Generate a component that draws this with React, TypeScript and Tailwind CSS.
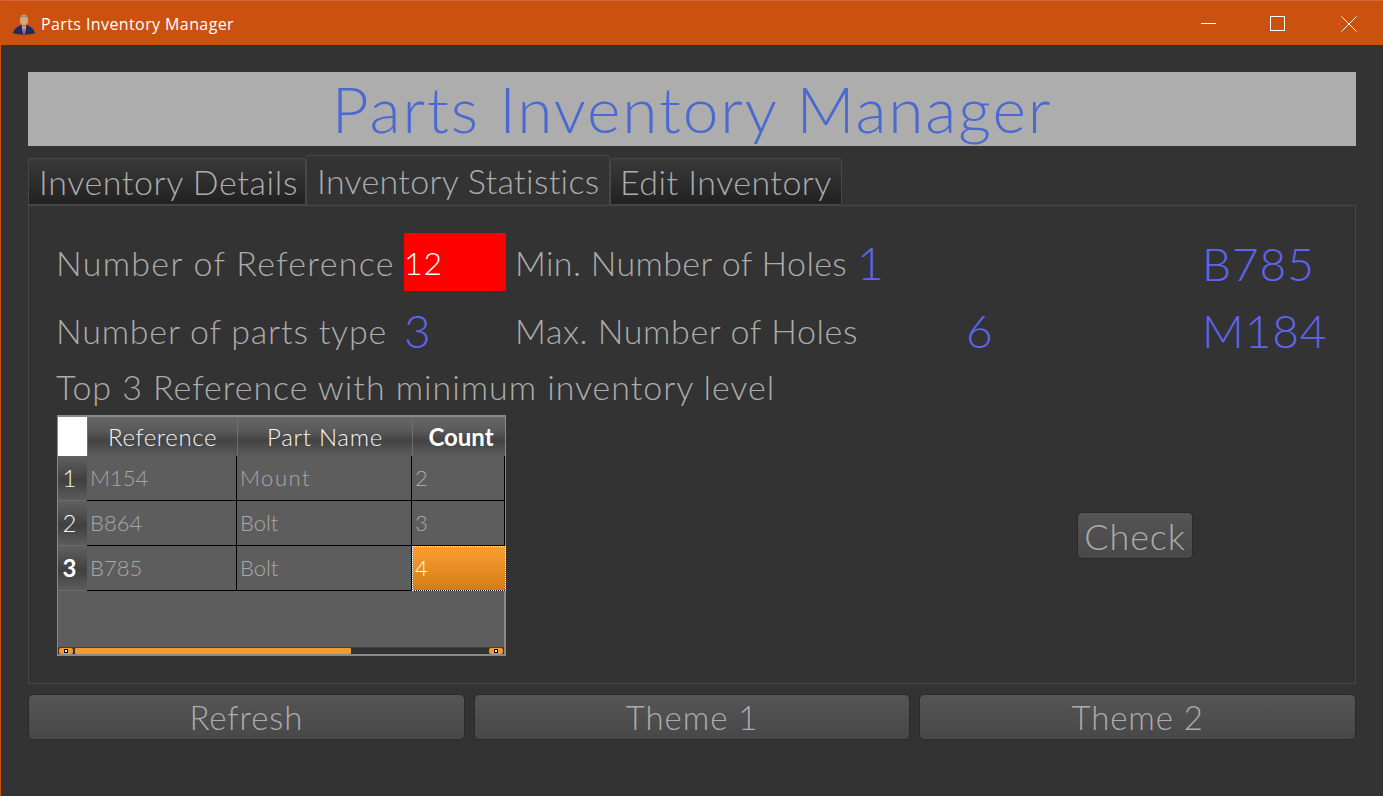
import React from "react";

const headerCell = "flex items-center justify-center bg-[linear-gradient(#666666,#5a5a5a_35%,#434343_60%,#5c5c5c)] border-l border-[#6e6e6e] text-[24px] text-[#f4f4f4]";
const rowHead = "flex items-center justify-center pr-[6px] bg-[linear-gradient(#606060,#404040_55%,#5c5c5c)] border-b border-[#6a6a6a] text-[24px] text-[#f4f4f4]";
const cell = "flex items-center pl-[3px] border-b border-r border-black text-[22px] text-[#a8a8a8]";
const bottomButton = "flex-1 h-[46px] pt-px rounded-[5px] border border-[#2a2a2a] bg-[linear-gradient(#555555,#484848)] text-[33px] text-[#acacac] font-light tracking-[0.9px] flex items-center justify-center";
const value = "text-[#5f65ec] text-[46px] tracking-[0.9px]";

function Person() {
  return (
    <svg width="24" height="24" viewBox="0 0 24 24">
      <ellipse cx="12" cy="8" rx="4.2" ry="5.5" fill="#d9a47c" />
      <path d="M7.8 6.5C8 2.5 16 2.5 16.2 6.5C14 4.5 10 4.5 7.8 6.5Z" fill="#8f8a80" />
      <path d="M1 21.5C2 15.5 7 14 9.5 13L12 15L14.5 13C17 14 22 15.5 23 21.5C16 23 8 23 1 21.5Z" fill="#1f2c63" />
      <path d="M10 13.5L12 15L14 13.5L13 21.5H11Z" fill="#e8d9d0" />
      <path d="M11.5 15H12.5L13 21H11Z" fill="#b5533c" />
    </svg>
  );
}

export default function App() {
  return (
    <div className="h-screen overflow-hidden flex flex-col bg-[#333333] border-l border-[#cb510e] font-['Lato',sans-serif] font-light">
      <div className="h-[45px] shrink-0 -ml-px pl-[12px] pt-px flex items-center bg-[#cb510e] border-t border-[#d5683a] text-white">
        <Person />
        <span className="ml-[5px] text-[16px] font-normal tracking-[0.4px] font-['Open_Sans',sans-serif]">Parts Inventory Manager</span>
        <div className="ml-auto flex items-center">
          <div className="w-[65px] flex justify-center"><div className="w-[15px] h-px bg-white" /></div>
          <div className="w-[73px] flex justify-center"><div className="w-[15px] h-[15px] border border-white" /></div>
          <div className="w-[69px] flex justify-center">
            <svg width="16" height="16" viewBox="0 0 16 16"><path d="M0.5 0.5L15.5 15.5M15.5 0.5L0.5 15.5" stroke="#fff" strokeWidth="1" /></svg>
          </div>
        </div>
      </div>

      <div className="flex-1 pl-[27px] pr-[27px] pt-[27px] flex flex-col">
        <div className="h-[74px] flex items-center justify-center bg-[#adadad] text-[#4b69d1] text-[64px] tracking-[1.9px] leading-none whitespace-nowrap">
          Parts Inventory Manager
        </div>

        <div className="flex items-end h-[58px] mt-px text-[34px] text-[#acacac] leading-none whitespace-nowrap">
          <div className="w-[278px] h-[47px] pl-[10px] tracking-[0.6px] flex items-center border border-[#474747] rounded-t-[3px] bg-[linear-gradient(#3a3a3a,#212121)]">Inventory Details</div>
          <div className="w-[304px] h-[50px] pl-[10px] tracking-[0.3px] flex items-center border border-b-0 border-[#474747] rounded-t-[3px] bg-[#333333]">Inventory Statistics</div>
          <div className="w-[232px] h-[47px] pl-[9px] tracking-[0.45px] flex items-center border border-[#474747] rounded-t-[3px] bg-[linear-gradient(#3a3a3a,#212121)]">Edit Inventory</div>
        </div>

        <div className="h-[479px] border border-[#474747] pl-[28px] pt-[27px] text-[#acacac] text-[34px] leading-none whitespace-nowrap">
          <div className="flex items-center h-[58px]">
            <div className="w-[348px] -ml-px pt-px tracking-[1.3px]">Number of Reference</div>
            <div className="w-[102px] h-[58px] pt-px bg-[#ff0000] text-white text-[32px] tracking-[0.9px] flex items-center">12</div>
            <div className="w-[342px] ml-[9px] pt-px tracking-[0.35px]">Min. Number of Holes</div>
            <div className={"w-[345px] pt-px " + value}>1</div>
            <div className={"pt-[3px] " + value}>B785</div>
          </div>
          <div className="flex items-center h-[58px] mt-[11px]">
            <div className="w-[348px] -ml-px tracking-[0.8px]">Number of parts type</div>
            <div className={"w-[102px] " + value}>3</div>
            <div className="w-[451px] ml-[9px] tracking-[0.6px]">Max. Number of Holes</div>
            <div className={"w-[236px] " + value}>6</div>
            <div className={value}>M184</div>
          </div>
          <div className="h-[34px] mt-[10px] -ml-px flex items-center tracking-[0.95px]">Top 3 Reference with minimum inventory level</div>

          <div className="flex items-center mt-[11px]">
            <div className="w-[449px] h-[241px] border border-[#8a8a8a] border-t-2 border-r-2 border-b-2 bg-[#5d5d5d] flex flex-col">
              <div className="grid grid-cols-[29px_150px_175px_93px] h-[39px]">
                <div className="bg-white" />
                <div className={headerCell + " tracking-[0.6px]"}>Reference</div>
                <div className={headerCell + " tracking-[0.7px]"}>Part Name</div>
                <div className={headerCell + " text-[23px] pl-[4px] font-bold text-white"}>Count</div>
              </div>
              <div className="grid grid-cols-[29px_150px_175px_93px] grid-rows-[45px_45px_45px]">
                <div className={rowHead}>1</div>
                <div className={cell}>M154</div>
                <div className={cell + " tracking-[1.5px]"}>Mount</div>
                <div className={cell}>2</div>
                <div className={rowHead}>2</div>
                <div className={cell}>B864</div>
                <div className={cell}>Bolt</div>
                <div className={cell}>3</div>
                <div className={rowHead + " font-bold text-white"}>3</div>
                <div className={cell}>B785</div>
                <div className={cell}>Bolt</div>
                <div className="flex items-center pl-[3px] -mr-px text-[22px] text-white bg-[linear-gradient(#fb9f30,#d47c18)] outline-1 -outline-offset-1 outline-dotted outline-white border-b border-black">4</div>
              </div>
              <div className="mt-auto h-[7px] flex items-center bg-[#333333] border-t border-[#3f3f3f] px-px">
                <div className="w-[14px] h-[6px] rounded-[2px] bg-[#f59a2d] flex items-center justify-center"><div className="w-[2px] h-[2px] bg-white border border-black box-content" /></div>
                <div className="w-[276px] h-[6px] ml-[2px] rounded-[1px] bg-[#f59a2d]" />
                <div className="w-[14px] h-[6px] ml-auto rounded-[2px] bg-[#f59a2d] flex items-center justify-center"><div className="w-[2px] h-[2px] bg-white border border-black box-content" /></div>
              </div>
            </div>
            <button className="ml-[571px] w-[116px] h-[47px] rounded-[5px] border border-[#2a2a2a] bg-[linear-gradient(#555555,#484848)] text-[36px] text-[#acacac] font-light tracking-[0.9px] flex items-center justify-center">Check</button>
          </div>
        </div>

        <div className="flex gap-[9px] mt-[10px]">
          <button className={bottomButton}>Refresh</button>
          <button className={bottomButton}>Theme 1</button>
          <button className={bottomButton}>Theme 2</button>
        </div>
      </div>
    </div>
  );
}
